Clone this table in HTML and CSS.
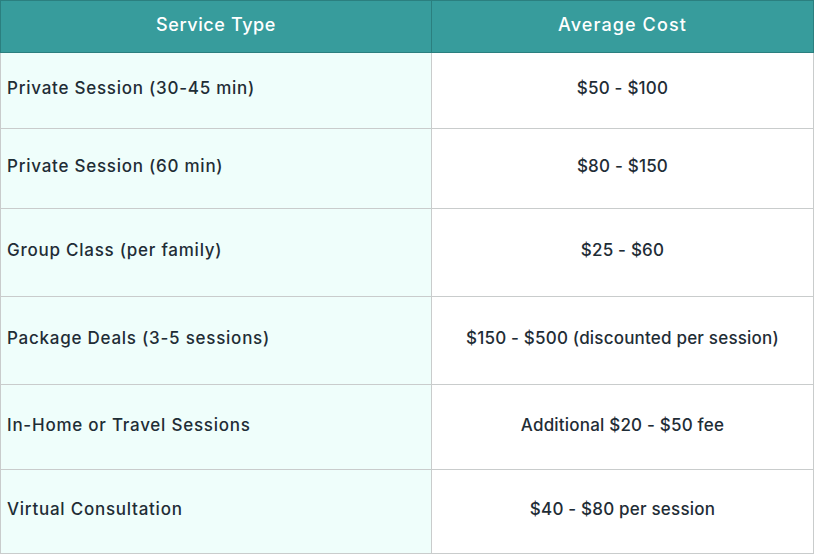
FILE: index.html
```html
<!DOCTYPE html>
<html>
<head>
<meta charset="utf-8">
<link rel="stylesheet" href="styles.css">
</head>
<body>
<table class="cost-table">
  <thead>
    <tr>
      <th class="col-service">Service Type</th>
      <th class="col-cost">Average Cost</th>
    </tr>
  </thead>
  <tbody>
    <tr class="r1"><td class="service">Private Session (30-45 min)</td><td class="cost">$50 - $100</td></tr>
    <tr class="r2"><td class="service">Private Session (60 min)</td><td class="cost">$80 - $150</td></tr>
    <tr class="r3"><td class="service">Group Class (per family)</td><td class="cost">$25 - $60</td></tr>
    <tr class="r4"><td class="service">Package Deals (3-5 sessions)</td><td class="cost">$150 - $500 (discounted per session)</td></tr>
    <tr class="r5"><td class="service">In-Home or Travel Sessions</td><td class="cost">Additional $20 - $50 fee</td></tr>
    <tr class="r6"><td class="service">Virtual Consultation</td><td class="cost">$40 - $80 per session</td></tr>
  </tbody>
</table>
</body>
</html>
```
FILE: styles.css
```css
html, body {
  margin: 0;
  padding: 0;
  background: #ffffff;
}
.cost-table {
  width: 814px;
  border-collapse: collapse;
  table-layout: fixed;
  font-family: Inter, "Noto Sans", sans-serif;
  color: #1f2d36;
}
.col-service { width: 430px; }
.cost-table th {
  background: #379c9c;
  color: #ffffff;
  font-weight: 500;
  font-size: 18px;
  letter-spacing: 0.6px;
  height: 47px;
  padding: 0 0 4px;
  border: 1px solid #2b7f7f;
  text-align: center;
}
.cost-table th.col-cost {
  letter-spacing: 1.1px;
}
.cost-table td {
  border: 1.5px solid #c9cccc;
  font-size: 17px;
  font-weight: 500;
  letter-spacing: 0.75px;
  padding: 0 0 5px;
}
.cost-table td.service {
  background: #effefb;
  padding-left: 6px;
  text-align: left;
}
.cost-table td.cost {
  background: #ffffff;
  letter-spacing: 0.2px;
  text-align: center;
}
.r1 { height: 76px; }
.r2 { height: 80px; }
.r3 { height: 88px; }
.r4 { height: 88px; }
.r5 { height: 85px; }
.r6 { height: 84px; }
```
